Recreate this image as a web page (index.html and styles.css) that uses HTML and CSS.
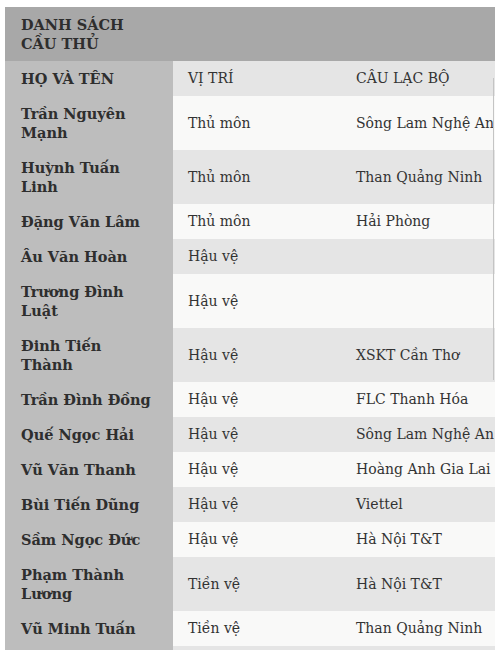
FILE: index.html
```html
<!DOCTYPE html>
<html lang="vi">
<head>
<meta charset="utf-8">
<title>Danh sách cầu thủ</title>
<link rel="stylesheet" href="styles.css">
</head>
<body>
<div class="wrap">
  <table class="players">
    <caption><span class="cap-text">DANH SÁCH CẦU THỦ</span></caption>
    <colgroup>
      <col class="c1"><col class="c2"><col class="c3">
    </colgroup>
    <thead>
      <tr><th>HỌ VÀ TÊN</th><td>VỊ TRÍ</td><td>CÂU LẠC BỘ</td></tr>
    </thead>
    <tbody>
      <tr><th>Trần Nguyên Mạnh</th><td>Thủ môn</td><td>Sông Lam Nghệ An</td></tr>
      <tr><th>Huỳnh Tuấn Linh</th><td>Thủ môn</td><td>Than Quảng Ninh</td></tr>
      <tr><th>Đặng Văn Lâm</th><td>Thủ môn</td><td>Hải Phòng</td></tr>
      <tr><th>Âu Văn Hoàn</th><td>Hậu vệ</td><td></td></tr>
      <tr><th>Trương Đình Luật</th><td>Hậu vệ</td><td></td></tr>
      <tr><th>Đinh Tiến Thành</th><td>Hậu vệ</td><td>XSKT Cần Thơ</td></tr>
      <tr><th>Trần Đình Đồng</th><td>Hậu vệ</td><td>FLC Thanh Hóa</td></tr>
      <tr><th>Quế Ngọc Hải</th><td>Hậu vệ</td><td>Sông Lam Nghệ An</td></tr>
      <tr><th>Vũ Văn Thanh</th><td>Hậu vệ</td><td>Hoàng Anh Gia Lai</td></tr>
      <tr><th>Bùi Tiến Dũng</th><td>Hậu vệ</td><td>Viettel</td></tr>
      <tr><th>Sầm Ngọc Đức</th><td>Hậu vệ</td><td>Hà Nội T&amp;T</td></tr>
      <tr><th>Phạm Thành Lương</th><td>Tiền vệ</td><td>Hà Nội T&amp;T</td></tr>
      <tr><th>Vũ Minh Tuấn</th><td>Tiền vệ</td><td>Than Quảng Ninh</td></tr>
      <tr class="empty"><th></th><td></td><td></td></tr>
    </tbody>
  </table>
  <div class="edge-line"></div>
</div>
</body>
</html>
```
FILE: styles.css
```css
html, body {
  margin: 0;
  padding: 0;
  background: #ffffff;
}
body {
  padding: 7px 0 0 5px;
  overflow: hidden;
  height: 650px;
  box-sizing: border-box;
}
.wrap {
  position: relative;
  width: 490px;
  height: 643px;
  overflow: hidden;
}
.players {
  border-collapse: collapse;
  border-spacing: 0;
  width: 540px;
  table-layout: fixed;
  font-family: "DejaVu Serif", "Liberation Serif", serif;
  font-size: 14.5px;
  line-height: 19px;
  color: #333333;
}
.c1 { width: 168px; }
.c2 { width: 167px; }
.c3 { width: 205px; }
caption {
  background: #a8a8a8;
  text-align: left;
  padding: 8px 16px;
  font-weight: bold;
  color: #2e2e2e;
}
.cap-text {
  display: block;
  width: 120px;
}
.players th,
.players td {
  padding: 8px 16px;
  text-align: left;
  vertical-align: middle;
  overflow: hidden;
}
.players th {
  background: #bdbdbd;
  font-weight: bold;
  color: #2e2e2e;
}
.players td {
  font-weight: normal;
  font-size: 14px;
  white-space: nowrap;
}
.players td:nth-child(2) {
  padding-left: 15px;
}
.players thead td {
  background: #e5e5e5;
}
.players tbody tr:nth-child(odd) td {
  background: #f9f9f8;
}
.players tbody tr:nth-child(even) td {
  background: #e5e5e5;
}
.players tr.empty th,
.players tr.empty td {
  height: 19px;
}
.edge-line {
  position: absolute;
  left: 488px;
  top: 71px;
  width: 1px;
  height: 302px;
  background: #c4c4c4;
}
```
